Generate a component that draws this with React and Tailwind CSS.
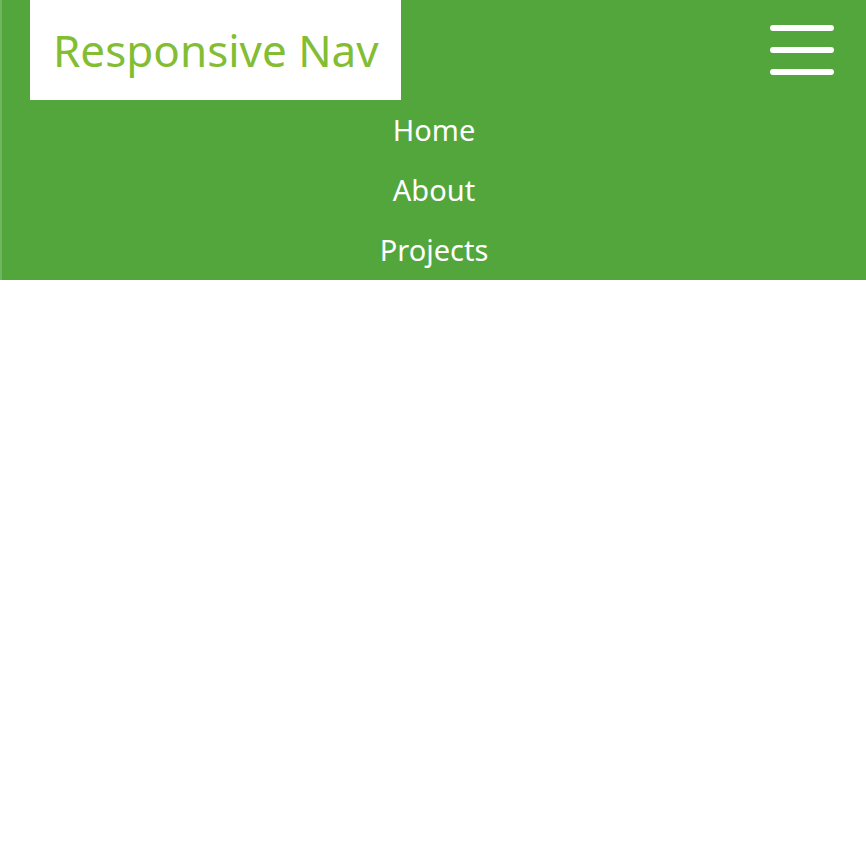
export default function App() {
  return (
    <div className="min-h-screen bg-white" style={{ fontFamily: '"Trebuchet MS", "Noto Sans", sans-serif' }}>
      <header className="bg-[#53a63c] border-l-2 border-[#6fb65e] h-[280px]">
        <div className="flex items-start justify-between">
          <a href="#" className="ml-[28px] w-[371px] h-[100px] bg-white flex items-center pl-[23px] text-[44px] text-[#82bd33]">
            Responsive Nav
          </a>
          <button className="mr-[32px] mt-[25px] flex flex-col gap-[16px]">
            <span className="block w-[64px] h-[6px] rounded-full bg-white" />
            <span className="block w-[64px] h-[6px] rounded-full bg-white" />
            <span className="block w-[64px] h-[6px] rounded-full bg-white" />
          </button>
        </div>
        <nav className="flex flex-col items-center text-white text-[29px]">
          <a href="#" className="h-[60px] leading-[60px]">Home</a>
          <a href="#" className="h-[60px] leading-[60px]">About</a>
          <a href="#" className="h-[60px] leading-[60px]">Projects</a>
        </nav>
      </header>
    </div>
  );
}
